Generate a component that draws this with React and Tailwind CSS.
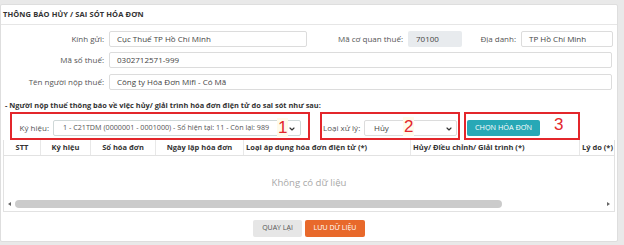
import React from "react";

const Chevron = ({ className = "" }) => (
  <svg width="8" height="8" viewBox="0 0 24 24" fill="none" stroke="#333" strokeWidth="3.5" strokeLinecap="round" strokeLinejoin="round" className={className}>
    <path d="m6 9 6 6 6-6" />
  </svg>
);

export default function App() {
  return (
    <div className="w-[624px] h-[245px] bg-[#e9e9e9] pt-[4px] pr-[6px] overflow-hidden" style={{ fontFamily: '"Open Sans", sans-serif' }}>
      <div className="bg-white h-[238px] w-[618px] border border-[#dedede] rounded-[2px] flex flex-col">
        {/* title */}
        <div className="h-[20px] border-b border-[#e6e6e6] flex items-center pl-[2px] text-[7.5px] font-bold text-[#333] tracking-[0.1px]">
          THÔNG BÁO HỦY / SAI SÓT HÓA ĐƠN
        </div>

        {/* row 1 */}
        <div className="flex items-center h-[16px] mt-[6px] text-[8px] text-[#555]">
          <div className="w-[103px] text-right">Kính gửi:</div>
          <div className="ml-[5px] w-[198px] h-[16px] border border-[#dcdcdc] rounded-[2px] flex items-center px-[7px] text-[#444]">Cục Thuế TP Hồ Chí Minh</div>
          <div className="w-[96px] text-right">Mã cơ quan thuế:</div>
          <div className="ml-[5px] w-[54px] h-[16px] rounded-[2px] bg-[#e8ebee] flex items-center px-[8px] text-[#444]">70100</div>
          <div className="w-[54px] text-right">Địa danh:</div>
          <div className="ml-[5px] w-[92px] h-[16px] border border-[#dcdcdc] rounded-[2px] flex items-center px-[7px] text-[#444]">TP Hồ Chí Minh</div>
        </div>

        {/* row 2 */}
        <div className="flex items-center h-[16px] mt-[5px] text-[8px] text-[#555]">
          <div className="w-[103px] text-right">Mã số thuế:</div>
          <div className="ml-[5px] w-[503px] h-[16px] border border-[#dcdcdc] rounded-[2px] flex items-center px-[7px] text-[#444]">0302712571-999</div>
        </div>

        {/* row 3 */}
        <div className="flex items-center h-[16px] mt-[6px] text-[8px] text-[#555]">
          <div className="w-[103px] text-right">Tên người nộp thuế:</div>
          <div className="ml-[5px] w-[503px] h-[16px] border border-[#dcdcdc] rounded-[2px] flex items-center px-[7px] text-[#444]">Công ty Hóa Đơn Mifi - Có Mã</div>
        </div>

        {/* note */}
        <div className="mt-[10px] h-[10px] leading-[10px] pl-[4px] text-[7.4px] font-bold text-[#333]">
          - Người nộp thuế thông báo về việc hủy/ giải trình hóa đơn điện tử do sai sót như sau:
        </div>

        {/* red boxes row */}
        <div className="flex mt-[2px] h-[28px] pl-[9px] text-[8px] text-[#555]">
          <div className="w-[300px] h-[28px] border-2 border-[#e3262b] flex items-center pt-[3px]">
            <div className="w-[41px] text-right pr-[4px]">Ký hiệu:</div>
            <div className="relative w-[248px] h-[16px] border border-[#cfd8d8] rounded-[2px] flex items-center pl-[9px] text-[7.2px] text-[#555] whitespace-nowrap">
              1 - C21TDM (0000001 - 0001000) - Số hiện tại: 11 - Còn lại: 989
              <span className="absolute left-[223px] top-[-3px] px-[1px] bg-[#fffbea] text-[17px] leading-[19px] text-[#e3262b]" style={{ fontFamily: '"Liberation Sans", sans-serif' }}>1</span>
              <Chevron className="absolute right-[4px] top-[4px]" />
            </div>
          </div>

          <div className="ml-[10px] w-[140px] h-[28px] border-2 border-[#e3262b] flex items-center pt-[3px]">
            <div className="pl-[1px] w-[42px]">Loại xử lý:</div>
            <div className="relative w-[93px] h-[16px] border border-[#dcdcdc] rounded-[2px] flex items-center pl-[9px] text-[#444]">
              Hủy
              <span className="absolute left-[38px] top-[-4px] px-[1px] bg-[#fffbea] text-[17px] leading-[19px] text-[#e3262b]" style={{ fontFamily: '"Liberation Sans", sans-serif' }}>2</span>
              <Chevron className="absolute right-[3px] top-[4px]" />
            </div>
          </div>

          <div className="ml-[4px] w-[116px] h-[28px] border-2 border-[#e3262b] flex items-center pt-[3px] relative">
            <div className="ml-[1px] w-[73px] h-[16px] bg-[#27a8b6] rounded-[2px] flex items-center justify-center text-white text-[7.3px]">
              CHỌN HÓA ĐƠN
            </div>
            <span className="absolute left-[88px] top-[1px] text-[17px] leading-[20px] text-[#e3262b]" style={{ fontFamily: '"Liberation Sans", sans-serif' }}>3</span>
          </div>
        </div>

        {/* table */}
        <div className="ml-[2px] w-[612px] h-[72px] border-x border-b border-[#e2e2e2] flex flex-col">
          <div className="flex h-[16px] border-b border-[#e2e2e2] text-[7.5px] font-bold text-[#333]">
            <div className="w-[37px] border-r border-[#e8e8e8] flex items-center justify-center">STT</div>
            <div className="w-[50px] border-r border-[#e8e8e8] flex items-center justify-center">Ký hiệu</div>
            <div className="w-[65px] border-r border-[#e8e8e8] flex items-center justify-center">Số hóa đơn</div>
            <div className="w-[88px] border-r border-[#e8e8e8] flex items-center justify-center">Ngày lập hóa đơn</div>
            <div className="w-[167px] border-r border-[#e8e8e8] flex items-center pl-[2px]">Loại áp dụng hóa đơn điện tử (*)</div>
            <div className="w-[169px] border-r border-[#e8e8e8] flex items-center pl-[2px]">Hủy/ Điều chỉnh/ Giải trình (*)</div>
            <div className="flex-1 flex items-center pl-[2px] whitespace-nowrap overflow-hidden">Lý do (*)</div>
          </div>
          <div className="flex-1 flex flex-col">
            <div className="mt-[21px] h-[12px] leading-[12px] text-center text-[9.6px] text-[#a8a8a8]">Không có dữ liệu</div>
            <div className="mt-[11px] h-[8px] flex items-center">
              <div className="w-[10px] flex justify-center">
                <div className="w-0 h-0 border-y-[2.5px] border-y-transparent border-r-[3px] border-r-[#666]"></div>
              </div>
              <div className="w-[487px] h-[8px] rounded-full bg-[#cbcbcb] ml-[1px]"></div>
              <div className="flex-1 flex justify-end pr-[4px]">
                <div className="w-0 h-0 border-y-[2.5px] border-y-transparent border-l-[3px] border-l-[#666]"></div>
              </div>
            </div>
          </div>
        </div>

        {/* buttons */}
        <div className="mt-[8px] flex justify-center gap-[3px]">
          <div className="w-[49px] h-[17px] bg-[#e6e6e6] rounded-[2px] flex items-center justify-center text-[7px] text-[#555]">QUAY LẠI</div>
          <div className="w-[60px] h-[17px] bg-[#e8692b] rounded-[2px] flex items-center justify-center text-[7px] text-white">LƯU DỮ LIỆU</div>
        </div>
      </div>
    </div>
  );
}
